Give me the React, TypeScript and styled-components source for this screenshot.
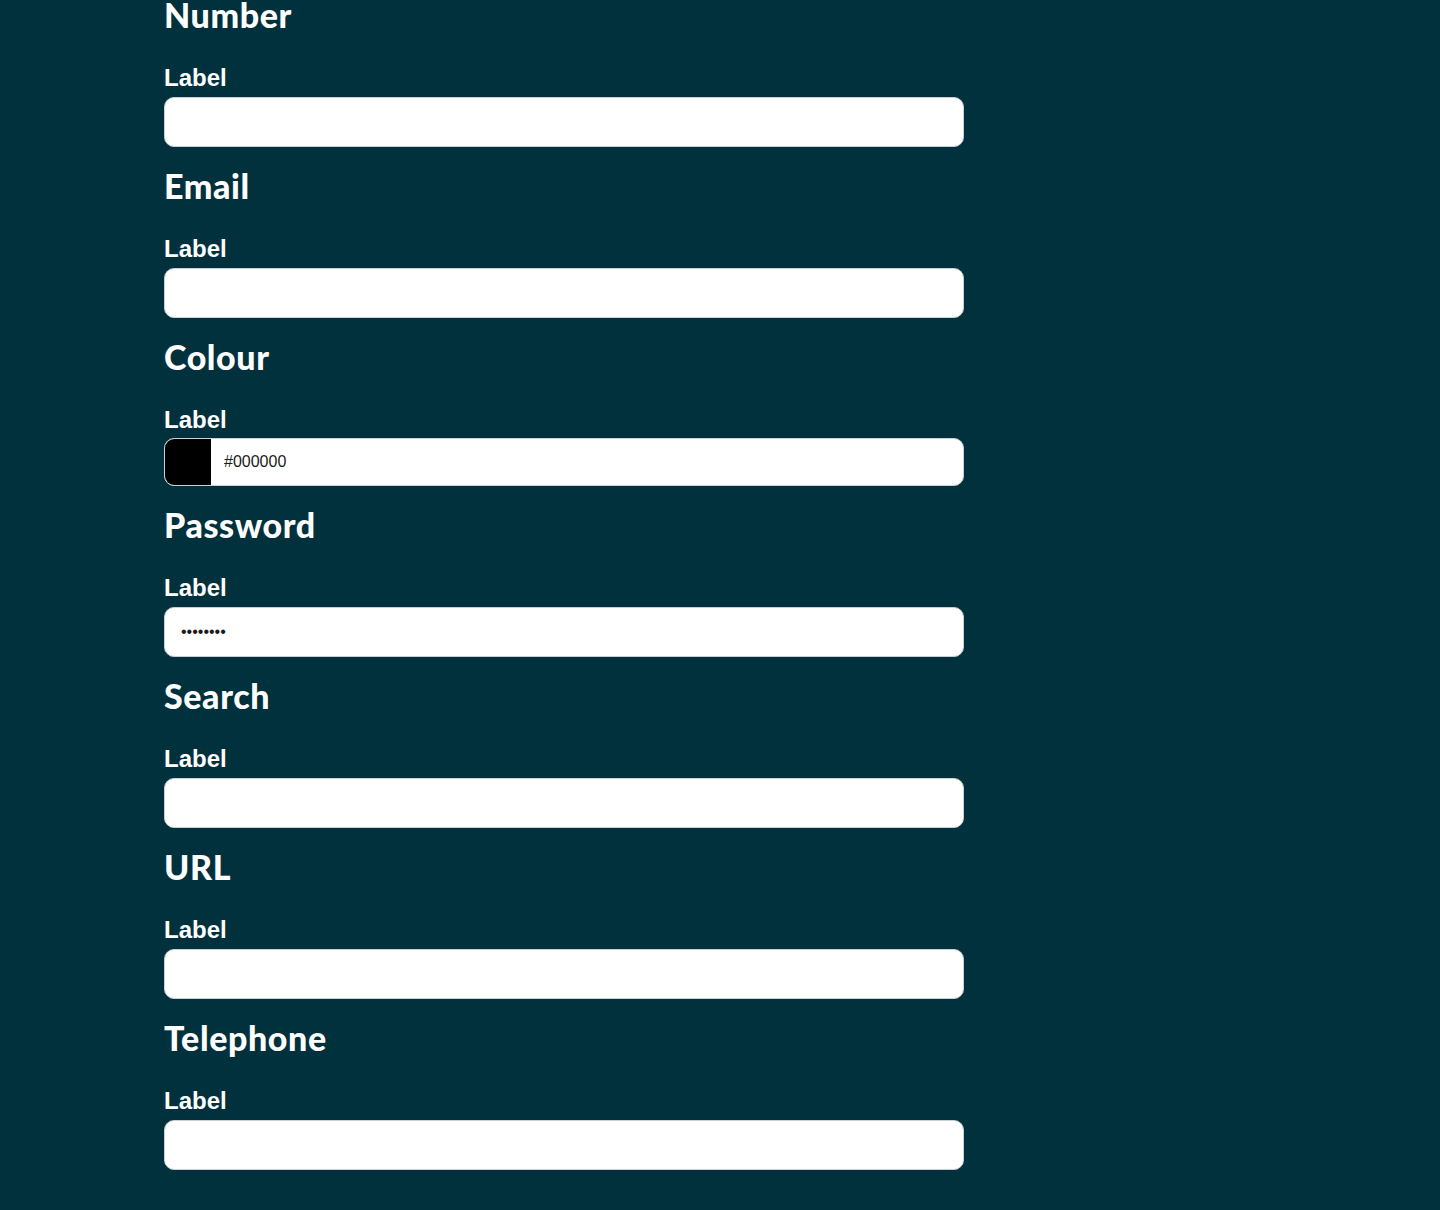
import React from "react";
import styled, { createGlobalStyle } from "styled-components";

const GlobalStyle = createGlobalStyle`
  html, body {
    margin: 0;
    padding: 0;
    background: #02313e;
  }
  body {
    font-family: "Liberation Sans", Arial, sans-serif;
    overflow: hidden;
  }
`;

const Page = styled.main`
  min-height: 1210px;
  background: #02313e;
  padding: 0 0 40px 164px;
  box-sizing: border-box;
`;

const Stack = styled.div`
  width: 800px;
  margin-top: -7px;
  display: flex;
  flex-direction: column;
  gap: 17px;
`;

const Section = styled.section`
  display: flex;
  flex-direction: column;
`;

const Heading = styled.h2`
  margin: 0;
  padding-top: 2px;
  font-family: Lato, "Open Sans", sans-serif;
  font-weight: 900;
  font-size: 34px;
  line-height: 40px;
  letter-spacing: 0.6px;
  color: #ffffff;
`;

const Label = styled.label<{ $tight?: boolean }>`
  display: block;
  margin-top: 29px;
  margin-bottom: ${(p) => (p.$tight ? "4px" : "5px")};
  font-family: "Liberation Sans", Arial, sans-serif;
  font-weight: 700;
  font-size: 24px;
  line-height: 28px;
  color: #ffffff;
`;

const Input = styled.input`
  box-sizing: border-box;
  width: 100%;
  height: 50px;
  padding: 0 16px;
  border: 1px solid #c9cfd2;
  border-radius: 10px;
  background: #ffffff;
  font-family: "Liberation Sans", Arial, sans-serif;
  font-size: 16px;
  color: #1b1b1b;
  outline: none;
`;

const ColourField = styled.div`
  box-sizing: border-box;
  display: flex;
  align-items: center;
  width: 100%;
  height: 48px;
  border: 1px solid #c9cfd2;
  border-radius: 10px;
  background: #ffffff;
  overflow: hidden;
`;

const Swatch = styled.div<{ $colour: string }>`
  width: 46px;
  height: 100%;
  background: ${(p) => p.$colour};
  flex-shrink: 0;
`;

const ColourText = styled.input`
  flex: 1;
  height: 100%;
  border: none;
  padding: 0 13px;
  font-family: "Liberation Sans", Arial, sans-serif;
  font-size: 16px;
  color: #1b1b1b;
  background: transparent;
  outline: none;
`;

const fields = [
  { title: "Number", type: "number" },
  { title: "Email", type: "email" },
  { title: "Colour", type: "color" },
  { title: "Password", type: "password", value: "password" },
  { title: "Search", type: "search" },
  { title: "URL", type: "url" },
  { title: "Telephone", type: "tel" },
];

export default function App() {
  return (
    <>
      <GlobalStyle />
      <Page>
        <Stack>
          {fields.map((f) => (
            <Section key={f.title}>
              <Heading>{f.title}</Heading>
              <Label $tight={f.type === "color"}>Label</Label>
              {f.type === "color" ? (
                <ColourField>
                  <Swatch $colour="#000000" />
                  <ColourText type="text" defaultValue="#000000" />
                </ColourField>
              ) : (
                <Input type={f.type} defaultValue={f.value} />
              )}
            </Section>
          ))}
        </Stack>
      </Page>
    </>
  );
}
